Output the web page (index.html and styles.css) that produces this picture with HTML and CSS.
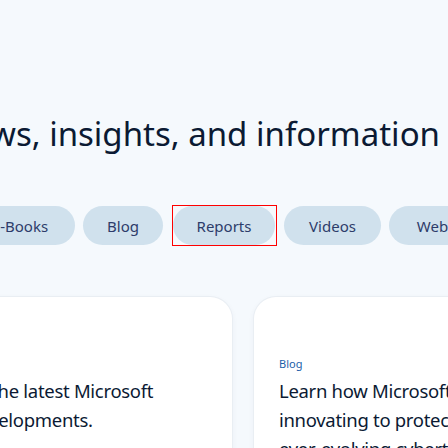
FILE: index.html
```html
<!DOCTYPE html>
<html lang="en">
<head>
<meta charset="utf-8">
<title>Security resources</title>
<link rel="stylesheet" href="styles.css">
</head>
<body>
<main class="page">
  <h1 class="headline"><span class="headline-text">Get the latest news, insights, and information</span></h1>
  <nav class="tabs">
    <a class="pill pill-ebooks">E-Books</a>
    <a class="pill pill-blog">Blog</a>
    <span class="focus-ring"><a class="pill pill-reports">Reports</a></span>
    <a class="pill pill-videos">Videos</a>
    <a class="pill pill-webinars">Webinars</a>
  </nav>
  <section class="cards">
    <article class="card">
      <p class="card-kind">Report</p>
      <p class="card-title">Stay up on the latest Microsoft<br>security developments.</p>
    </article>
    <article class="card">
      <p class="card-kind">Blog</p>
      <p class="card-title">Learn how Microsoft is<br>innovating to protect against<br>ever-evolving cyberthreats.</p>
    </article>
  </section>
</main>
</body>
</html>
```
FILE: styles.css
```css
html, body {
  margin: 0;
  padding: 0;
  background: #f5f9fd;
  overflow: hidden;
}
body {
  width: 448px;
  height: 448px;
  font-family: "Noto Sans", "Open Sans", sans-serif;
  color: #0b1a33;
}
.page {
  padding-top: 112px;
}
.headline {
  margin: 0;
  display: flex;
  justify-content: flex-end;
  padding-right: 8px;
  white-space: nowrap;
  font-size: 33px;
  font-weight: 400;
  line-height: 44px;
  color: #0b1a33;
}
.tabs {
  display: flex;
  align-items: center;
  gap: 8px;
  margin-top: 49px;
  margin-left: -35px;
  white-space: nowrap;
}
.pill {
  display: flex;
  align-items: center;
  justify-content: center;
  box-sizing: border-box;
  height: 39px;
  border-radius: 20px;
  background: #d0e1ed;
  color: #2d3c6a;
  font-size: 15px;
  flex: none;
}
.pill-ebooks { width: 110px; }
.pill-blog { width: 80px; }
.pill-reports { width: 102px; }
.pill-videos { width: 97px; }
.pill-webinars { width: 122px; }
.focus-ring {
  display: flex;
  border: 1px solid #f00;
  padding: 0 1px 0 0;
  margin: 0 -1px 0 1px;
  flex: none;
}
.cards {
  display: flex;
  gap: 22px;
  margin-top: 51px;
  margin-left: -127px;
}
.card {
  flex: none;
  width: 359px;
  height: 300px;
  box-sizing: border-box;
  padding: 58px 25px 0;
  background: #fff;
  border-radius: 22px;
  box-shadow: 0 0 0 1px #e9eef3, 0 2px 6px rgba(20, 40, 80, 0.06);
}
.card-kind {
  margin: 0;
  font-size: 11px;
  line-height: 18px;
  color: #1b5ea8;
}
.card-title {
  margin: 3px 0 0;
  font-size: 18.5px;
  letter-spacing: -0.3px;
  line-height: 29px;
  white-space: nowrap;
  color: #0b1a33;
}
```
